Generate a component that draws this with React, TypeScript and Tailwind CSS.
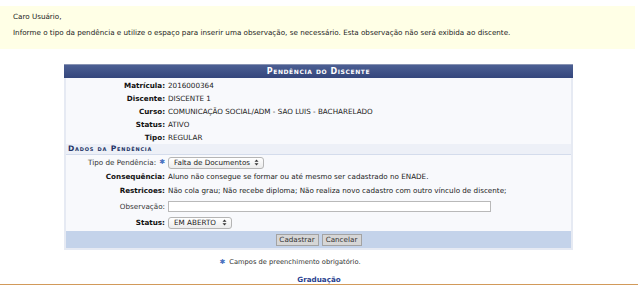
import React from 'react';

const Star: React.FC = () => (
  <span className="text-[#4a72c0] text-[7px] leading-none">&#10033;</span>
);

const Arrows: React.FC = () => (
  <svg width="5" height="7" viewBox="0 0 5 7" className="ml-auto">
    <path d="M2.5 0.5 L4.5 2.8 H0.5 Z" fill="#333" />
    <path d="M2.5 6.5 L4.5 4.2 H0.5 Z" fill="#333" />
  </svg>
);

const FakeSelect: React.FC<{ text: string; width: string }> = ({ text, width }) => (
  <div
    className={`${width} h-[12px] flex items-center pl-[5px] pr-[4px] border border-[#b5b5b5] rounded-[3px] bg-gradient-to-b from-white to-[#ececec] text-[#222]`}
  >
    <span>{text}</span>
    <Arrows />
  </div>
);

const InfoRow: React.FC<{ label: string; value: string }> = ({ label, value }) => (
  <div className="flex items-center h-[13px]">
    <div className="w-[99px] text-right font-bold text-[#111]">{label}:</div>
    <div className="pl-[3px] text-[#222]">{value}</div>
  </div>
);

const App: React.FC = () => {
  return (
    <div
      className="w-[638px] h-[285px] bg-white overflow-hidden text-[7.2px] leading-none text-[#222]"
      style={{ fontFamily: '"DejaVu Sans", Verdana, sans-serif' }}
    >
      {/* aviso */}
      <div className="mt-[6px] w-[635px] h-[43px] bg-[#ffffe6] pl-[13px] pt-[7px] text-[#222]">
        <p className="h-[16px]">Caro Usuário,</p>
        <p>
          Informe o tipo da pendência e utilize o espaço para inserir uma observação, se necessário. Esta
          observação não será exibida ao discente.
        </p>
      </div>

      {/* formulário */}
      <div className="ml-[64px] mt-[15px] w-[509px] border-x-2 border-b-2 border-[#e6eaf3]">
        <div className="h-[14px] -mx-[2px] bg-gradient-to-b from-[#4c5f93] to-[#34467c] border-t border-[#8893b3] flex items-center justify-center text-white font-bold text-[8px] tracking-[0.6px] [font-variant:small-caps]">
          Pendência do Discente
        </div>
        <div className="bg-[#f8f9fc] pt-[1px]">
          <InfoRow label="Matrícula" value="2016000364" />
          <InfoRow label="Discente" value="DISCENTE 1" />
          <InfoRow label="Curso" value="COMUNICAÇÃO SOCIAL/ADM - SAO LUIS - BACHARELADO" />
          <InfoRow label="Status" value="ATIVO" />
          <InfoRow label="Tipo" value="REGULAR" />
        </div>
        <div className="h-[11px] bg-[#edf0f7] border-b border-[#d4dcec] flex items-center pl-[2px] font-bold text-[#223366] text-[7.6px] tracking-[0.8px] [font-variant:small-caps]">
          Dados da Pendência
        </div>
        <div className="bg-[#f8f9fc]">
          <div className="flex items-center h-[15px]">
            <div className="w-[99px] text-right text-[#333] flex items-center justify-end gap-[3px]">
              <span>Tipo de Pendência:</span>
              <Star />
            </div>
            <div className="pl-[3px]">
              <FakeSelect text="Falta de Documentos" width="w-[96px]" />
            </div>
          </div>
          <div className="flex items-center h-[14px]">
            <div className="w-[99px] text-right font-bold text-[#111]">Consequência:</div>
            <div className="pl-[3px]">Aluno não consegue se formar ou até mesmo ser cadastrado no ENADE.</div>
          </div>
          <div className="flex items-center h-[13px]">
            <div className="w-[99px] text-right font-bold text-[#111]">Restricoes:</div>
            <div className="pl-[3px]">
              Não cola grau; Não recebe diploma; Não realiza novo cadastro com outro vínculo de discente;
            </div>
          </div>
          <div className="flex items-center h-[17px] pt-[2px]">
            <div className="w-[99px] text-right text-[#333]">Observação:</div>
            <div className="pl-[3px]">
              <div className="w-[323px] h-[11px] bg-white border border-[#b9b9b9]" />
            </div>
          </div>
          <div className="flex items-center h-[17px]">
            <div className="w-[99px] text-right font-bold text-[#111]">Status:</div>
            <div className="pl-[3px]">
              <FakeSelect text="EM ABERTO" width="w-[64px]" />
            </div>
          </div>
        </div>
        <div className="h-[17px] bg-[#c4d3ea] flex items-center justify-center gap-[3px]">
          <button className="h-[12px] w-[43px] bg-[#d6d6d6] border border-[#a3a3a3] text-[#333] flex items-center justify-center">
            Cadastrar
          </button>
          <button className="h-[12px] w-[40px] bg-[#d6d6d6] border border-[#a3a3a3] text-[#333] flex items-center justify-center">
            Cancelar
          </button>
        </div>
      </div>

      <div className="mt-[9px] flex items-center justify-center gap-[4px] pr-[58px] text-[6.7px] text-[#333]">
        <Star />
        <span>Campos de preenchimento obrigatório.</span>
      </div>

      <div className="mt-[10px] text-center font-bold text-[#2a3f8f] text-[7.2px]">Graduação</div>
      <div className="mt-[1px] h-[3px] bg-[#d29a5a]" />
    </div>
  );
};

export default App;
